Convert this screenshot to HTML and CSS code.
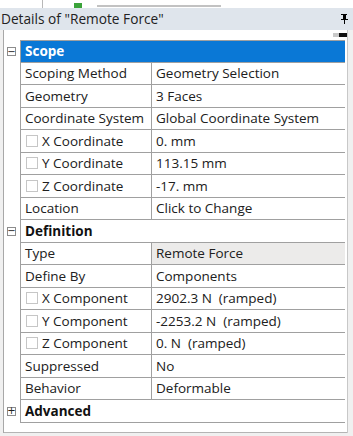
FILE: index.html
```html
<!DOCTYPE html>
<html>
<head>
<meta charset="utf-8">
<link rel="stylesheet" href="styles.css">
</head>
<body>
<div class="top">
  <span class="top-line"></span>
  <span class="top-icon"></span>
  <span class="top-text"></span>
</div>
<div class="title">
  <span class="title-text">Details of "Remote Force"</span>
  <svg class="pin" width="8" height="10" viewBox="0 0 8 10"><path d="M1 0h6v1h-1v4h2v1h-3v4h-1v-4h-3v-1h2v-4h-2z" fill="#000"/></svg>
</div>
<div class="frame">
  <div class="scrollhint"><span class="sh-grey"></span><span class="sh-black"></span></div>
  <div class="grid">
    <div class="gut"><span class="exp">&minus;</span></div>
    <div class="sec sel">Scope</div>

    <div class="gut"></div><div class="c n">Scoping Method</div><div class="c v">Geometry Selection</div>
    <div class="gut"></div><div class="c n">Geometry</div><div class="c v">3 Faces</div>
    <div class="gut"></div><div class="c n">Coordinate System</div><div class="c v">Global Coordinate System</div>
    <div class="gut"></div><div class="c n"><span class="cb"></span>X Coordinate</div><div class="c v">0. mm</div>
    <div class="gut"></div><div class="c n"><span class="cb"></span>Y Coordinate</div><div class="c v">113.15 mm</div>
    <div class="gut"></div><div class="c n"><span class="cb"></span>Z Coordinate</div><div class="c v">-17. mm</div>
    <div class="gut"></div><div class="c n">Location</div><div class="c v">Click to Change</div>

    <div class="gut"><span class="exp">&minus;</span></div>
    <div class="sec">Definition</div>

    <div class="gut"></div><div class="c n">Type</div><div class="c v ro">Remote Force</div>
    <div class="gut"></div><div class="c n">Define By</div><div class="c v">Components</div>
    <div class="gut"></div><div class="c n"><span class="cb"></span>X Component</div><div class="c v">2902.3 N&nbsp; (ramped)</div>
    <div class="gut"></div><div class="c n"><span class="cb"></span>Y Component</div><div class="c v">-2253.2 N&nbsp; (ramped)</div>
    <div class="gut"></div><div class="c n"><span class="cb"></span>Z Component</div><div class="c v">0. N&nbsp; (ramped)</div>
    <div class="gut"></div><div class="c n">Suppressed</div><div class="c v">No</div>
    <div class="gut"></div><div class="c n">Behavior</div><div class="c v">Deformable</div>

    <div class="gut"><span class="exp">+</span></div>
    <div class="sec">Advanced</div>
  </div>
  <div class="bottom-pad"></div>
</div>
</body>
</html>
```
FILE: styles.css
```css
html, body {
  margin: 0;
  padding: 0;
}
body {
  width: 353px;
  height: 436px;
  overflow: hidden;
  background: #f0f0f0;
  font-family: "Open Sans", "Noto Sans", sans-serif;
  color: #1a1a1a;
}
.top {
  height: 8px;
  background: #fff;
  position: relative;
  overflow: hidden;
}
.top-line {
  position: absolute;
  left: 42px;
  top: 0;
  width: 1px;
  height: 8px;
  background: #b8b8b8;
}
.top-icon {
  position: absolute;
  left: 74px;
  top: 3px;
  width: 8px;
  height: 5px;
  background: #3aa33a;
}
.top-text {
  position: absolute;
  left: 97px;
  top: 5px;
  width: 124px;
  height: 2px;
  background: #9a9a9a;
  opacity: 0.6;
}
.title {
  height: 22px;
  background: #dfe5ec;
  display: flex;
  align-items: center;
  justify-content: space-between;
  padding: 0 5px 0 1px;
  font-size: 13.7px;
  color: #222;
}
.title-text {
  line-height: 22px;
}
.pin {
  display: block;
}
.frame {
  margin-left: 3px;
  width: 345px;
  border-left: 1px solid #a8a8a8;
  border-right: 1px solid #c8c8c8;
  background: #fff;
  box-sizing: border-box;
  padding-top: 10px;
  position: relative;
}
.scrollhint {
  position: absolute;
  right: 0;
  top: 3px;
  display: flex;
  height: 4px;
}
.sh-grey {
  width: 6px;
  background: #c8c8c8;
}
.sh-black {
  width: 8px;
  background: #111;
}
.grid {
  display: grid;
  grid-template-columns: 16px 131px 194px;
  grid-auto-rows: 22.5px;
}
.gut {
  background: #fff;
  display: flex;
  align-items: center;
  padding-left: 3px;
}
.gut:first-child + .sec,
.gut:first-child {
  border-top: 1px solid #a0a0a0;
}
.gut:first-child {
  border-top-color: transparent;
}
.exp {
  width: 9px;
  height: 9px;
  border: 1px solid #8c8c8c;
  box-sizing: border-box;
  display: flex;
  align-items: center;
  justify-content: center;
  font-size: 10px;
  line-height: 1;
  color: #222;
  font-family: "DejaVu Sans", sans-serif;
  background: #fff;
}
.sec {
  grid-column: span 2;
  border-left: 1px solid #a0a0a0;
  border-bottom: 1px solid #a0a0a0;
  font-weight: bold;
  font-size: 13.5px;
  padding-left: 4px;
  display: flex;
  align-items: center;
  color: #111;
}
.sec.sel {
  background: #0a78d6;
  color: #fff;
}
.c {
  border-bottom: 1px solid #a0a0a0;
  display: flex;
  align-items: center;
  font-size: 13.5px;
  padding-left: 4px;
  white-space: nowrap;
  overflow: hidden;
  color: #202020;
}
.n {
  border-left: 1px solid #a0a0a0;
}
.v {
  border-left: 1px solid #a0a0a0;
}
.ro {
  background: #ecebea;
}
.cb {
  width: 12px;
  height: 12px;
  border: 1px solid #c6c6c6;
  box-sizing: border-box;
  margin-right: 4px;
  margin-left: 1px;
  background: #fff;
}
.bottom-pad {
  height: 9px;
  border-bottom: 1px solid #b4b4b4;
}
```
